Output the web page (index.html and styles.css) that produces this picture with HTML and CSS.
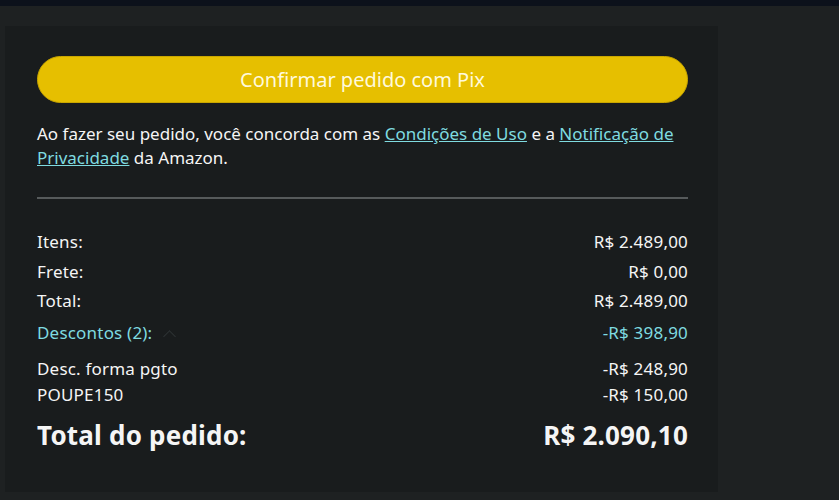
FILE: index.html
```html
<!DOCTYPE html>
<html lang="pt-BR">
<head>
    <meta charset="UTF-8">
    <title>Finalizar pedido</title>
    <link rel="stylesheet" href="styles.css">
</head>
<body>
    <div class="topbar"></div>
    <div class="page">
        <div class="order-box">
            <button class="place-order" type="button">Confirmar pedido com Pix</button>
            <p class="terms">
                Ao fazer seu pedido, você concorda com as <a href="#">Condições de Uso</a> e a <a href="#">Notificação de Privacidade</a> da Amazon.
            </p>
            <hr class="divider">
            <div class="summary">
                <div class="row"><span>Itens:</span><span>R$ 2.489,00</span></div>
                <div class="row"><span>Frete:</span><span>R$ 0,00</span></div>
                <div class="row"><span>Total:</span><span>R$ 2.489,00</span></div>
                <div class="row discounts">
                    <span>Descontos (2): <span class="caret"></span></span>
                    <span>-R$ 398,90</span>
                </div>
                <div class="discount-list">
                    <div class="row"><span>Desc. forma pgto</span><span>-R$ 248,90</span></div>
                    <div class="row"><span>POUPE150</span><span>-R$ 150,00</span></div>
                </div>
                <div class="row grand-total"><span>Total do pedido:</span><span>R$ 2.090,10</span></div>
            </div>
        </div>
    </div>
</body>
</html>
```

FILE: styles.css
```css
body {
    margin: 0;
    background-color: #1e2122;
    font-family: "Noto Sans", Arial, sans-serif;
    color: #f5f5f5;
    height: 500px;
    overflow: hidden;
}
.topbar {
    height: 6px;
    background-color: #0c111b;
}
.page {
    padding: 20px 0 0 5px;
}
.order-box {
    width: 651px;
    height: 436px;
    background-color: #191c1d;
    padding: 30px 30px 0 32px;
}
.place-order {
    display: block;
    width: 100%;
    height: 47px;
    background-color: #e6bf00;
    border: 1px solid #c9a600;
    border-radius: 24px;
    color: #fff9dc;
    font-family: inherit;
    font-size: 20px;
    cursor: pointer;
}
.terms {
    margin: 19px 0 0;
    font-size: 17px;
    line-height: 24px;
}
.terms a {
    color: #7fdbe0;
    text-decoration: underline;
}
.divider {
    margin: 27px 0 0;
    border: none;
    border-top: 2px solid #565a5b;
}
.summary {
    padding-top: 33px;
    font-size: 17px;
}
.row {
    display: flex;
    justify-content: space-between;
    line-height: 20px;
    margin-bottom: 9.5px;
}
.row span {
    letter-spacing: 0.2px;
}
.discounts {
    color: #7fdbe0;
    margin-top: 12px;
    margin-bottom: 16px;
}
.caret {
    display: inline-block;
    width: 8px;
    height: 8px;
    margin-left: 8px;
    border-top: 1px solid #2e3335;
    border-left: 1px solid #2e3335;
    transform: rotate(45deg);
    vertical-align: -2px;
}
.discount-list .row {
    margin-bottom: 6px;
}
.grand-total {
    margin-top: 15px;
    font-size: 26px;
    font-weight: bold;
    line-height: 30px;
}
```
